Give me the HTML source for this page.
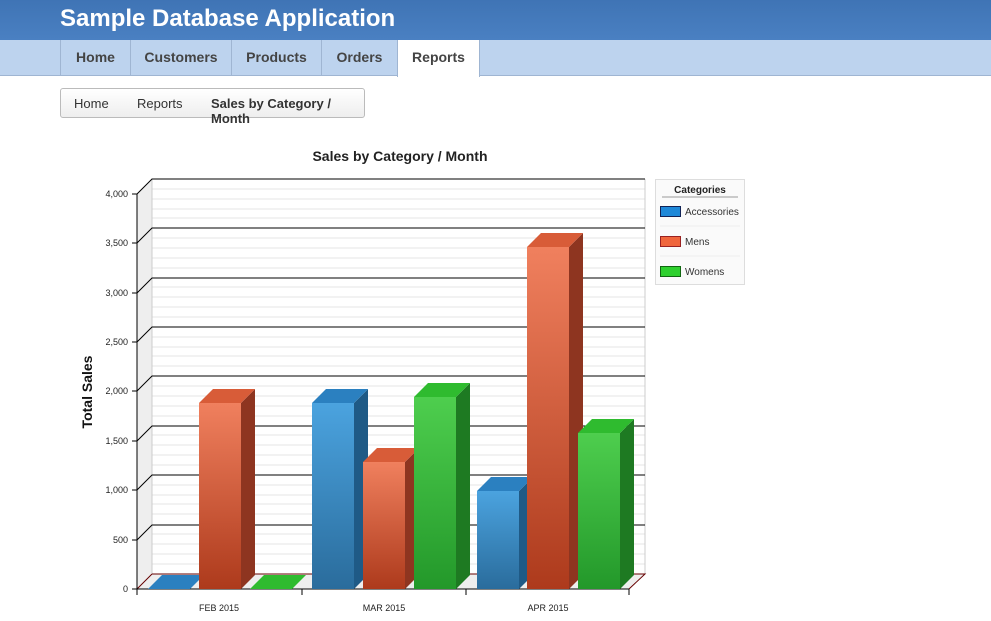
<!DOCTYPE html>
<html><head><meta charset="utf-8"><style>
*{margin:0;padding:0;box-sizing:border-box}
body{width:991px;height:621px;overflow:hidden;background:#fff;font-family:"Liberation Sans",Arial,sans-serif}
.hdr{height:40px;background:linear-gradient(#3f74b5,#4a80c2);color:#fff;font-weight:bold;font-size:24px;padding:5px 0 0 60px}
.nav{height:36px;background:#bdd3ee;border-bottom:1px solid #9fb5d2;position:relative}
.nav span{position:absolute;top:0;height:36px;line-height:34px;text-align:center;font-size:14px;font-weight:bold;color:#444;border-left:1px solid #9fb5d2}
.bc{position:absolute;top:88px;left:60px;height:30px;border:1px solid #bbb;border-radius:3px;background:linear-gradient(#fff,#eee);font-size:13px;color:#333;width:305px}
.bc span{position:absolute;top:7px}
</style></head><body>
<div class="hdr">Sample Database Application</div>
<div class="nav">
<span style="left:60px;width:70px">Home</span>
<span style="left:130px;width:101px">Customers</span>
<span style="left:231px;width:90px">Products</span>
<span style="left:321px;width:76px">Orders</span>
<span style="left:397px;width:83px;background:#fff;height:37px;border-right:1px solid #9fb5d2">Reports</span>
</div>
<div class="bc"><span style="left:13px">Home</span><span style="left:76px">Reports</span><span style="left:150px;font-weight:bold">Sales by Category / Month</span></div>
<svg style="position:absolute;left:0;top:0" width="991" height="621" font-family="Liberation Sans,Arial,sans-serif">
<defs>
<linearGradient id="bf" x1="0" y1="0" x2="0" y2="1"><stop offset="0" stop-color="#4ba3df"/><stop offset="1" stop-color="#2a6c9c"/></linearGradient>
<linearGradient id="mf" x1="0" y1="0" x2="0" y2="1"><stop offset="0" stop-color="#f0805e"/><stop offset="1" stop-color="#ad3a1c"/></linearGradient>
<linearGradient id="gf" x1="0" y1="0" x2="0" y2="1"><stop offset="0" stop-color="#4ece4e"/><stop offset="1" stop-color="#23982a"/></linearGradient>
</defs>
<polygon points="122,590 137,575 137,589 122,590" fill="#fff"/>
<text x="400" y="161" font-size="14" font-weight="bold" text-anchor="middle" fill="#222">Sales by Category / Month</text>
<text transform="translate(92,392) rotate(-90)" font-size="14" font-weight="bold" text-anchor="middle" fill="#111">Total Sales</text>
<!-- side wall -->
<polygon points="137,194 152,179 152,574 137,589" fill="#eee"/>
<polygon points="137,589 152,574 645,574 629,589" fill="#eee"/>
<g stroke="#e6e6e6">
<line x1="152" y1="189" x2="645" y2="189"/><line x1="152" y1="199" x2="645" y2="199"/><line x1="152" y1="209" x2="645" y2="209"/><line x1="152" y1="218" x2="645" y2="218"/>
<line x1="152" y1="238" x2="645" y2="238"/><line x1="152" y1="248" x2="645" y2="248"/><line x1="152" y1="258" x2="645" y2="258"/><line x1="152" y1="268" x2="645" y2="268"/>
<line x1="152" y1="287" x2="645" y2="287"/><line x1="152" y1="297" x2="645" y2="297"/><line x1="152" y1="307" x2="645" y2="307"/><line x1="152" y1="317" x2="645" y2="317"/>
<line x1="152" y1="337" x2="645" y2="337"/><line x1="152" y1="347" x2="645" y2="347"/><line x1="152" y1="356" x2="645" y2="356"/><line x1="152" y1="366" x2="645" y2="366"/>
<line x1="152" y1="386" x2="645" y2="386"/><line x1="152" y1="396" x2="645" y2="396"/><line x1="152" y1="406" x2="645" y2="406"/><line x1="152" y1="416" x2="645" y2="416"/>
<line x1="152" y1="435" x2="645" y2="435"/><line x1="152" y1="445" x2="645" y2="445"/><line x1="152" y1="455" x2="645" y2="455"/><line x1="152" y1="465" x2="645" y2="465"/>
<line x1="152" y1="485" x2="645" y2="485"/><line x1="152" y1="495" x2="645" y2="495"/><line x1="152" y1="504" x2="645" y2="504"/><line x1="152" y1="514" x2="645" y2="514"/>
<line x1="152" y1="534" x2="645" y2="534"/><line x1="152" y1="544" x2="645" y2="544"/><line x1="152" y1="554" x2="645" y2="554"/><line x1="152" y1="564" x2="645" y2="564"/>
<line x1="152" y1="179" x2="152" y2="574" stroke="#ccc"/><line x1="645" y1="179" x2="645" y2="574" stroke="#ccc"/>
</g>
<g stroke="#000" fill="none">
<path d="M137,194 L152,179 H645 M137,243 L152,228 H645 M137,293 L152,278 H645 M137,342 L152,327 H645 M137,391 L152,376 H645 M137,441 L152,426 H645 M137,490 L152,475 H645 M137,540 L152,525 H645"/>
<path d="M152,574 H645 L629,589 M137,589 L152,574" stroke="#600"/>
<path d="M137,194 V589 H629 M132,194 H137 M132,243 H137 M132,293 H137 M132,342 H137 M132,391 H137 M132,441 H137 M132,490 H137 M132,540 H137 M132,589 H137 M137,589 V595 M302,589 V595 M466,589 V595 M629,589 V595"/>
</g>
<g font-size="9" fill="#222" text-anchor="end">
<text x="128" y="197">4,000</text><text x="128" y="246">3,500</text><text x="128" y="296">3,000</text><text x="128" y="345">2,500</text><text x="128" y="394">2,000</text><text x="128" y="444">1,500</text><text x="128" y="493">1,000</text><text x="128" y="543">500</text><text x="128" y="592">0</text>
</g>
<g font-size="9" fill="#222" text-anchor="middle"><text x="219" y="611">FEB 2015</text><text x="384" y="611">MAR 2015</text><text x="548" y="611">APR 2015</text></g>
<!-- bars -->
<g>
<polygon points="148,589 162,575 204,575 190,589" fill="#2b80c0"/>
<polygon points="250,589 264,575 306,575 292,589" fill="#2fbb2f"/>
</g>
<g id="bars"></g>
<!-- Legend -->
<rect x="655.5" y="179.5" width="89" height="105" fill="#fafafa" stroke="#ddd"/>
<text x="700" y="193" font-size="10" font-weight="bold" text-anchor="middle" fill="#222">Categories</text>
<line x1="662" y1="197" x2="738" y2="197" stroke="#999"/>
<line x1="660" y1="226" x2="740" y2="226" stroke="#eee"/><line x1="660" y1="256" x2="740" y2="256" stroke="#eee"/>
<rect x="660.5" y="206.5" width="20" height="10" fill="#1e88d8" stroke="#125"/>
<rect x="660.5" y="236.5" width="20" height="10" fill="#f0663c" stroke="#922"/>
<rect x="660.5" y="266.5" width="20" height="10" fill="#2ed02e" stroke="#161"/>
<g font-size="10" fill="#333"><text x="685" y="215">Accessories</text><text x="685" y="245">Mens</text><text x="685" y="275">Womens</text></g>
</svg>
<script>
var bars=[[199,403,'m'],[312,403,'b'],[363,462,'m'],[414,397,'g'],[477,491,'b'],[527,247,'m'],[578,433,'g']];
var c={b:['#2b80c0','#1f5a86'],m:['#d85c38','#8e3520'],g:['#2fbb2f','#1e7a22']};
var s='';
bars.forEach(function(b){var x=b[0],t=b[1],k=b[2];
s+='<rect x="'+x+'" y="'+t+'" width="42" height="'+(589-t)+'" fill="url(#'+k+'f)"/>';
s+='<polygon points="'+(x+42)+','+t+' '+(x+56)+','+(t-14)+' '+(x+56)+',575 '+(x+42)+',589" fill="'+c[k][1]+'"/>';
s+='<polygon points="'+x+','+t+' '+(x+14)+','+(t-14)+' '+(x+56)+','+(t-14)+' '+(x+42)+','+t+'" fill="'+c[k][0]+'"/>';});
document.getElementById('bars').innerHTML=s;
</script>
</body></html>
